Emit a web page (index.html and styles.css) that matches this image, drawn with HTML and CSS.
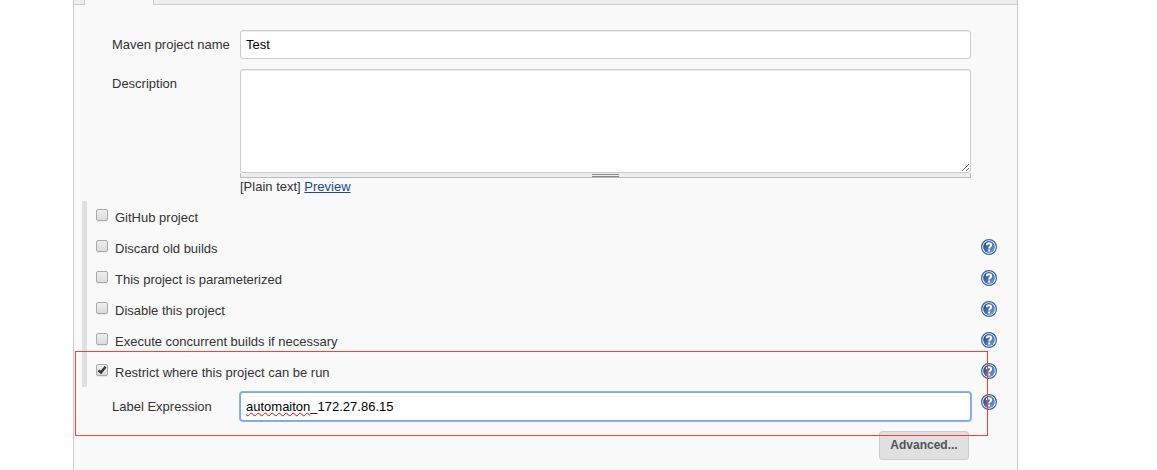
FILE: index.html
```
<!DOCTYPE html>
<html lang="en">
<head>
  <meta charset="UTF-8" />
  <title>Test Config [Jenkins]</title>
  <link rel="stylesheet" href="styles.css">
</head>
<body>
  <svg width="0" height="0" class="defs">
    <defs>
      <linearGradient id="blue" x1="0" y1="0" x2="1" y2="1">
        <stop offset="0.1" stop-color="#204a87"/>
        <stop offset="1" stop-color="#7ba3d4"/>
      </linearGradient>
      <symbol id="help" viewBox="0 0 16 16">
        <circle cx="8" cy="8" r="7.4" fill="#fff" stroke="#3a629b" stroke-width="1.2"/>
        <circle cx="8" cy="8" r="5.9" fill="url(#blue)"/>
        <path d="M5.8 6.2C5.8 3.6 10.2 3.6 10.2 6C10.2 7.6 8.2 7.5 8.2 9.4" fill="none" stroke="#fff" stroke-width="2"/>
        <rect x="7.2" y="10.5" width="2" height="2" fill="#fff"/>
      </symbol>
    </defs>
  </svg>

  <main class="config">
    <div class="tab-bar">
      <div class="tab-before"></div>
      <div class="tab-active"></div>
      <div class="tab-after"></div>
    </div>

    <form class="form">
      <div class="row row-name">
        <label class="name" for="name">Maven project name</label>
        <input class="text-input" id="name" type="text" value="Test">
      </div>

      <div class="row row-description">
        <label class="name" for="description">Description</label>
        <div class="editor">
          <textarea class="textarea" id="description"></textarea>
          <div class="handle"><span class="grip"></span></div>
          <div class="preview">[Plain text] <a class="link" href="#">Preview</a></div>
        </div>
      </div>

      <div class="options">
        <div class="option">
          <input class="check" type="checkbox" id="github">
          <label class="option-label" for="github">GitHub project</label>
        </div>
        <div class="option">
          <input class="check" type="checkbox" id="discard">
          <label class="option-label" for="discard">Discard old builds</label>
          <svg class="help"><use href="#help"/></svg>
        </div>
        <div class="option">
          <input class="check" type="checkbox" id="params">
          <label class="option-label" for="params">This project is parameterized</label>
          <svg class="help"><use href="#help"/></svg>
        </div>
        <div class="option">
          <input class="check" type="checkbox" id="disable">
          <label class="option-label" for="disable">Disable this project</label>
          <svg class="help"><use href="#help"/></svg>
        </div>
        <div class="option">
          <input class="check" type="checkbox" id="concurrent">
          <label class="option-label" for="concurrent">Execute concurrent builds if necessary</label>
          <svg class="help"><use href="#help"/></svg>
        </div>
        <div class="option">
          <input class="check" type="checkbox" id="restrict" checked>
          <label class="option-label" for="restrict">Restrict where this project can be run</label>
          <svg class="help"><use href="#help"/></svg>
        </div>
      </div>

      <div class="row row-expression">
        <span class="name">Label Expression</span>
        <div class="text-input focused" contenteditable="true" spellcheck="false"><span class="misspelled">automaiton</span>_172.27.86.15</div>
        <svg class="help"><use href="#help"/></svg>
      </div>

      <div class="actions">
        <button class="advanced" type="button">Advanced...</button>
      </div>
    </form>

    <div class="highlight"></div>
  </main>
</body>
</html>
```

FILE: styles.css
```
* {
  box-sizing: border-box;
}

body {
  margin: 0;
  background: #fff;
  color: #333;
  font-family: "Liberation Sans", Arial, sans-serif;
  font-size: 13px;
  line-height: 15px;
}

.defs {
  display: block;
}

.config {
  position: relative;
  width: 945px;
  height: 470px;
  margin-left: 73px;
  overflow: hidden;
  background: #f9f9f9;
  border: solid #ccc;
  border-width: 0 1px;
}

.tab-bar {
  display: flex;
  height: 5px;
}

.tab-before {
  width: 11px;
  background: #eee;
  border: solid #ccc;
  border-width: 0 1px 1px 0;
}

.tab-active {
  width: 68px;
}

.tab-after {
  flex: 1;
  background: #eee;
  border: solid #ccc;
  border-width: 0 0 1px 1px;
}

.row {
  display: flex;
  align-items: flex-start;
  padding-left: 38px;
}

.row-name {
  padding-top: 25px;
}

.row-description {
  padding-top: 10px;
}

.name {
  width: 128px;
  padding-top: 7px;
  white-space: nowrap;
}

.text-input {
  width: 731px;
  height: 29px;
  padding: 6px 5px;
  border: 1px solid #ccc;
  border-radius: 3px;
  background: #fff;
  box-shadow: inset 0 1px 1px rgba(0, 0, 0, 0.075);
  color: #000;
  font: inherit;
  outline: none;
}

.editor {
  width: 731px;
}

.textarea {
  display: block;
  width: 731px;
  height: 104px;
  padding: 6px;
  border: 1px solid #ccc;
  border-radius: 3px;
  background: #fff;
  box-shadow: inset 0 1px 1px rgba(0, 0, 0, 0.075);
  resize: vertical;
}

.handle {
  display: flex;
  justify-content: center;
  height: 5px;
  background: #eee;
  border: solid #bbb;
  border-width: 0 1px 1px;
}

.grip {
  width: 27px;
  height: 3px;
  margin-top: 1px;
  border: solid #888880;
  border-width: 1px 0;
}

.preview {
  padding-top: 1px;
  height: 23px;
}

.link {
  color: #204a87;
  text-decoration: underline;
}

.options {
  height: 186px;
  margin-left: 8px;
  border-left: 5px solid #e0e0e0;
}

.option {
  display: flex;
  align-items: flex-start;
  height: 31px;
  padding: 8px 20px 0 9px;
}

.check {
  appearance: none;
  width: 12px;
  height: 12px;
  margin: 0;
  border: 1px solid #aaa;
  border-radius: 2px;
  background: linear-gradient(#eee, #dcdcdc);
  box-shadow: 0 1px 0 rgba(0, 0, 0, 0.06);
}

.check:checked {
  background: url("data:image/svg+xml,%3Csvg xmlns='http://www.w3.org/2000/svg' viewBox='0 0 10 10'%3E%3Cpath d='M1.5 5.3L4 7.5L8.5 1.8' fill='none' stroke='%23333' stroke-width='2.4'/%3E%3C/svg%3E"), linear-gradient(#eee, #dcdcdc);
}

.option-label {
  padding: 1px 0 0 7px;
}

.help {
  flex: none;
  width: 16px;
  height: 16px;
  margin-left: auto;
}

.option .help {
  margin-top: -1px;
}

.row-expression {
  padding: 5px 20px 0 38px;
}

.row-expression .help {
  margin-top: 2px;
}

.focused {
  border-color: #7ea6e8;
  box-shadow: 0 0 0 1px #8db2ef;
}

.misspelled {
  text-decoration: underline wavy #f00 1px;
  text-decoration-skip-ink: none;
  text-underline-offset: 1px;
}

.actions {
  display: flex;
  justify-content: flex-end;
  padding: 10px 48px 0 0;
}

.advanced {
  width: 90px;
  height: 29px;
  padding: 0;
  border: 1px solid #ccc;
  border-radius: 3px;
  background: #e0e0e0;
  color: #4d545d;
  font: bold 12px/27px "Liberation Sans", Arial, sans-serif;
}

/* outline drawn over the restrict section */
.highlight {
  position: absolute;
  left: 1px;
  top: 351px;
  width: 913px;
  height: 85px;
  border: 1px solid #f44336;
  pointer-events: none;
}
```
